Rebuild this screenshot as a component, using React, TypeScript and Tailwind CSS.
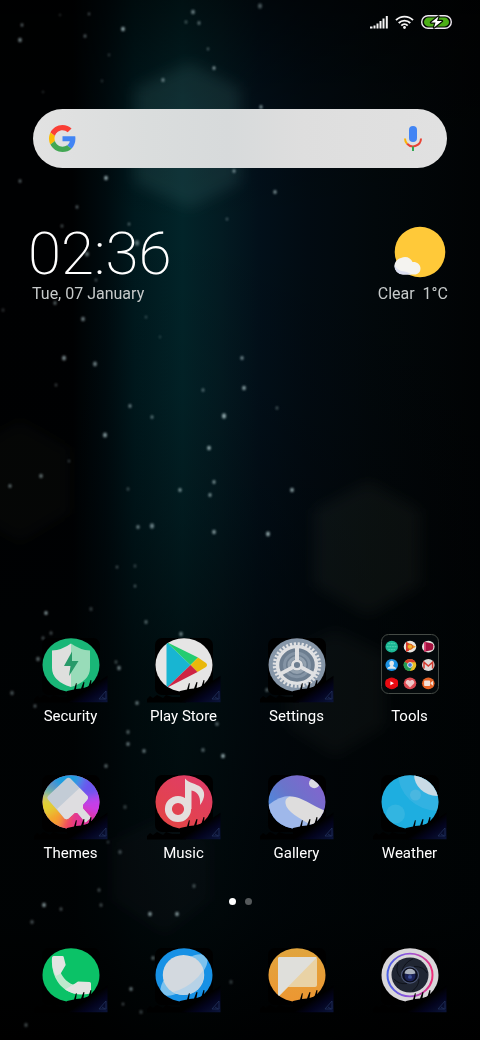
import type { ReactNode } from 'react'

// x, y, radius, opacity
const STARS: [number, number, number, number][] = [
    [22, 25, 1.5, 0.5], [20, 40, 2, 0.6], [60, 15, 1, 0.3], [89, 14, 1.3, 0.4], [85, 36, 1.6, 0.45],
    [123, 29, 2, 0.8], [109, 55, 1.2, 0.3], [102, 81, 1.2, 0.25], [163, 80, 1.7, 0.6], [193, 12, 2, 0.6],
    [186, 22, 1.5, 0.4], [199, 23, 1.7, 0.5], [208, 49, 1.2, 0.5], [214, 68, 1.6, 0.8], [260, 6, 2.3, 0.4],
    [261, 107, 1.7, 0.7], [43, 92, 1, 0.3], [20, 181, 1.6, 0.5], [106, 178, 2, 0.8], [77, 207, 1.5, 0.5],
    [62, 226, 1.5, 0.4], [129, 224, 1.4, 0.5], [137, 243, 2.4, 0.5], [87, 254, 2.2, 0.5], [96, 280, 1.4, 0.4],
    [234, 171, 1.6, 0.7], [275, 192, 1.8, 0.7], [227, 219, 1.4, 0.4], [55, 303, 1.7, 0.5], [3, 310, 1.6, 0.25],
    [83, 319, 2, 0.6], [146, 317, 1.4, 0.3], [160, 337, 1.2, 0.25], [64, 358, 2.2, 0.65], [95, 364, 2.1, 0.6],
    [56, 385, 1.5, 0.3], [242, 358, 1.8, 0.65], [244, 388, 2, 0.75], [203, 390, 1.6, 0.5], [130, 406, 1.7, 0.6],
    [152, 417, 1.6, 0.55], [224, 416, 2.3, 0.8], [277, 408, 1.5, 0.4], [105, 435, 2.2, 0.7], [209, 448, 2, 0.8],
    [69, 461, 1.4, 0.3], [41, 476, 2, 0.5], [10, 486, 1.8, 0.5], [128, 489, 1.5, 0.35], [180, 490, 1.8, 0.7],
    [214, 482, 1.7, 0.7], [210, 495, 1.7, 0.7], [292, 490, 2, 0.75], [138, 527, 1.8, 0.6], [152, 526, 2.3, 0.6],
    [214, 532, 2, 0.7], [268, 534, 2.1, 0.8], [117, 567, 1.4, 0.4], [135, 566, 1.5, 0.3], [135, 586, 1.4, 0.45],
    [46, 613, 1.8, 0.75], [91, 609, 1.7, 0.3], [146, 622, 1.7, 0.5], [51, 633, 1.6, 0.4], [43, 638, 1.6, 0.4],
    [38, 659, 1.9, 0.5], [181, 634, 1.9, 0.6], [116, 662, 1.5, 0.4], [119, 668, 1.9, 0.6], [12, 693, 1.9, 0.4],
    [35, 706, 1.6, 0.45], [137, 703, 1.8, 0.6], [267, 690, 1.7, 0.5], [217, 724, 1.8, 0.5], [128, 732, 1.7, 0.5],
    [128, 744, 1.8, 0.6], [144, 751, 1.8, 0.6], [203, 750, 1.8, 0.5], [223, 756, 2, 0.8], [106, 766, 1.8, 0.5],
    [125, 807, 1.8, 0.3], [108, 842, 1.4, 0.3], [120, 852, 1.8, 0.4], [194, 886, 1.7, 0.4], [99, 890, 1.6, 0.4],
    [44, 905, 2, 0.7], [61, 909, 1.6, 0.4], [101, 905, 1.6, 0.4], [32, 922, 1.8, 0.4], [150, 914, 2, 0.7],
    [177, 914, 2, 0.7], [153, 958, 1.7, 0.5], [131, 989, 1.8, 0.6], [231, 982, 1.7, 0.3], [123, 1004, 1.4, 0.4],
    [141, 1012, 1.8, 0.3], [26, 1025, 1.7, 0.4],
]

function Wallpaper() {
    return (
        <div className="absolute inset-0 overflow-hidden bg-[#010406]">
            <div className="absolute inset-0 bg-[linear-gradient(90deg,#000102_0%,#000102_15%,#000b0f_22%,#00191e_28%,#022429_38%,#031b22_46%,#02101a_54%,#020b12_64%,#02080b_78%,#010304_100%)]" />
            <div className="absolute inset-0 bg-[linear-gradient(180deg,rgba(0,0,0,0.55)_0%,rgba(0,0,0,0.1)_12%,rgba(0,0,0,0)_22%,rgba(0,2,4,0.1)_38%,rgba(0,2,4,0.3)_50%,rgba(0,3,4,0.65)_65%,rgba(0,3,4,0.82)_88%,rgba(0,0,0,0.95)_100%)]" />
            <svg width="480" height="1040" viewBox="0 0 480 1040" className="absolute left-0 top-0" aria-hidden="true">
                <defs>
                    <filter id="haze"><feGaussianBlur stdDeviation="7" /></filter>
                    <filter id="twinkle"><feGaussianBlur stdDeviation="0.8" /></filter>
                </defs>
                <g filter="url(#haze)">
                    <path d="M190 63l50 25v95l-50 25-55-25V88z" fill="#70a7aa" fillOpacity="0.13" />
                    <path d="M368 482l52 28v75l-52 30-54-30v-75z" fill="#7c8a74" fillOpacity="0.07" />
                    <path d="M335 630l50 24v72l-50 30-48-30v-72z" fill="#7c8a84" fillOpacity="0.055" />
                    <path d="M165 815l45 25v60l-45 35-53-35v-60z" fill="#8a7c84" fillOpacity="0.035" />
                    <path d="M20 420l50 28v65l-50 30-50-30v-65z" fill="#80807a" fillOpacity="0.035" />
                </g>
                <g filter="url(#twinkle)" fill="#b4cdd0">
                    {STARS.map(([x, y, r, o]) => (
                        <ellipse key={`${x}-${y}`} cx={x} cy={y} rx={r * 0.9} ry={r * 1.15} opacity={o} />
                    ))}
                </g>
            </svg>
        </div>
    )
}

function StatusBar() {
    return (
        <header className="flex h-11 items-center justify-end gap-[7px] pr-7">
            <svg width="18" height="14" viewBox="0 0 18 14" fill="#f5f5f5" role="img" aria-label="Signal">
                <path d="M0 11.500h2.500v2H0zM3.500 10.500h2v3h-2zM6.500 8.500h2v5h-2zM9.500 6h2v7.500h-2zM12.500 3.500h2v10h-2zM15.800 1h2v12.500h-2z" />
            </svg>
            <svg width="19" height="14" viewBox="0 0 19 14" fill="none" stroke="#f5f5f5" role="img" aria-label="Wi-Fi">
                <path d="M1 5.200a12 12 0 0 1 17 0M3.700 8a8.200 8.200 0 0 1 11.600 0M6.300 10.600a4.600 4.600 0 0 1 6.400 0" strokeWidth="1.900" />
                <circle cx="9.500" cy="12.500" r="1.400" fill="#f5f5f5" stroke="none" />
            </svg>
            <svg width="31" height="14" viewBox="0 0 31 14" role="img" aria-label="Battery charging">
                <rect x="0.700" y="0.700" width="29.600" height="12.600" rx="6.300" fill="#050805" stroke="#f0e9f3" strokeWidth="1.400" />
                <rect x="3" y="2.600" width="25" height="8.800" rx="4.400" fill="#4cae17" />
                <path d="M17.500 1.500L10 7.500h4.500l-1.500 5 8-6.500h-5z" fill="#fff" stroke="#081004" strokeWidth="2.400" strokeLinejoin="round" paintOrder="stroke" />
            </svg>
        </header>
    )
}

function SearchBar() {
    return (
        <form className="mx-[33px] mt-[65px] flex h-[59px] items-center rounded-full bg-[linear-gradient(90deg,#e2e2e2_0%,#dadddd_28%,#d7dadb_47%,#dedede_65%,#e1e1e1_100%)] pl-4 pr-6" onSubmit={(e) => e.preventDefault()}>
            <svg width="27" height="27" viewBox="0 0 48 48" role="img" aria-label="Google">
                <path fill="#fa3e35" d="M24 9.500c3.540 0 6.710 1.220 9.210 3.600l6.850-6.850C35.900 2.380 30.470 0 24 0 14.620 0 6.510 5.380 2.560 13.220l7.980 6.190C12.430 13.720 17.740 9.500 24 9.500z" />
                <path fill="#4285f4" d="M46.980 24.550c0-1.570-.15-3.090-.38-4.550H24v9.020h12.940c-.58 2.960-2.260 5.480-4.780 7.180l7.730 6c4.510-4.180 7.090-10.360 7.090-17.650z" />
                <path fill="#fbbc05" d="M10.530 28.590c-.48-1.450-.76-2.990-.76-4.590s.27-3.140.76-4.590l-7.980-6.190C.92 16.460 0 20.120 0 24c0 3.880.92 7.540 2.560 10.780l7.970-6.190z" />
                <path fill="#43a753" d="M24 48c6.480 0 11.930-2.130 15.890-5.810l-7.730-6c-2.150 1.450-4.920 2.300-8.160 2.300-6.260 0-11.570-4.220-13.470-9.910l-7.980 6.190C6.510 42.620 14.620 48 24 48z" />
            </svg>
            <input type="text" aria-label="Search" className="h-full min-w-0 flex-1 bg-transparent px-3 font-[Roboto,sans-serif] text-base text-gray-800 outline-none" />
            <button type="button" aria-label="Voice search">
                <svg width="20" height="27" viewBox="0 0 20 27" fill="none" strokeWidth="2">
                    <rect x="6" y="1" width="8" height="16" rx="4" fill="#4285f4" />
                    <path d="M2 13.500c0 2.100.8 3.900 2.100 5.200" stroke="#fbb305" />
                    <path d="M4.100 18.700A8 8 0 0 0 18 13.500" stroke="#ea4335" />
                    <path d="M10 21.500V26" stroke="#34a853" />
                </svg>
            </button>
        </form>
    )
}

function ClockWidget() {
    return (
        <section className="mt-[56px] flex justify-between pl-7 pr-8">
            <div>
                <time className="flex h-[60px] items-center font-[Roboto,sans-serif] text-[60px] font-extralight leading-[60px] text-white">02:36</time>
                <p className="pl-1 font-[Roboto,sans-serif] text-base leading-5 text-[#c6caca]">Tue, 07 January</p>
            </div>
            <div className="flex flex-col items-end">
                <svg width="54" height="60" viewBox="0 0 54 60" role="img" aria-label="Partly cloudy">
                    <circle cx="26" cy="28" r="25.300" fill="#ffc939" />
                    <path d="M9 50.500a8.500 8.500 0 0 1-8.500-8.500c0-5 4-7.500 6.500-8 5-2.500 10 0 11.500 4 4-.5 8 2 8 6.500 0 3.500-2.500 6-6 6z" fill="#f4f3f0" />
                    <path d="M.5 41c2 4.500 6 6 10 6.500 3 .5 5 1.500 7 3H9A8.500 8.500 0 0 1 .5 41z" fill="#dcdff0" />
                </svg>
                <p className="whitespace-pre font-[Roboto,sans-serif] text-base leading-5 text-[#c6caca]">Clear  1°C</p>
            </div>
        </section>
    )
}

// Round artwork on a black tile, with the jagged dark edge in the lower right corner.
function Tile({ name, base, children }: { name: string; base: string; children: ReactNode }) {
    const clip = `clip-${name}`
    return (
        <svg width="76" height="70" viewBox="0 -4 76 70" aria-hidden="true">
            <defs>
                <clipPath id={clip}><ellipse cx="38" cy="28" rx="28.500" ry="26.800" /></clipPath>
                <linearGradient id={`edge-${name}`} x1="0" y1="0" x2="1" y2="1">
                    <stop offset="0.500" stopColor="#000" />
                    <stop offset="0.700" stopColor="#03041f" />
                    <stop offset="1" stopColor="#0c163c" />
                </linearGradient>
            </defs>
            <rect x="9" y="1" width="58" height="57" rx="7" fill="#000" />
            <path d="M1 62l3-3 3 2 4-3 6 3 3-3 6 2h14v5.500H1z" fill="#000" />
            <g clipPath={`url(#${clip})`}>
                <rect width="76" height="60" fill={base} />
                {children}
            </g>
            <path d="M34 54l7-1.500 2-6.500.8.500-.8 5.500 5-.5 2.500-6.500 1 .3-1 5.700 5-1.500 2-6.500 1 .3-.5 5 4.500-1.500 2-5.500 1 .5v3l9-6v26.500H34z" fill={`url(#edge-${name})`} />
            <path d="M66 62l7-8v8zM69 60l3 2" fill="none" stroke="#22315a" strokeWidth="0.800" />
        </svg>
    )
}

function SecurityIcon() {
    return (
        <Tile name="security" base="#19b677">
            <path d="M38 6.500Q47 13 57 13.500V31q0 13-19 19z" fill="#98dcb9" />
            <path d="M38 6.500Q29 13 19 13.500V31q0 13 19 19z" fill="#dedfdd" />
            <path d="M39 14.500l-8 14.500h6.500L36 39l9.500-15H39z" fill="#279a69" />
        </Tile>
    )
}

function PlayStoreIcon() {
    return (
        <Tile name="play" base="#e6e5e5">
            <path d="M20.500 5v46L44.500 28z" fill="#18b5d2" />
            <path d="M20.500 5L52 20.500 44.500 28z" fill="#24cc71" />
            <path d="M52 20.500l8 5.500q2 2 0 4l-8.500 5L44.500 28z" fill="#e9b80b" />
            <path d="M20.500 51l24-23 7 7z" fill="#cf2444" />
        </Tile>
    )
}

function SettingsIcon() {
    return (
        <Tile name="settings" base="#8696a8">
            <g transform="translate(38 28) scale(1 0.940)" fill="none">
                <circle r="22.500" stroke="#e0e1e3" strokeWidth="3.500" strokeDasharray="2.200 1.727" />
                <circle r="19.500" fill="#6d7e90" stroke="#e0e1e3" strokeWidth="3.500" />
                <circle r="12.500" stroke="#8494a5" strokeWidth="3" />
                <circle r="8" stroke="#93a1af" strokeWidth="3" />
                <path d="M0-4v-15M3.500 2l13 7.500M-3.500 2l-13 7.500" stroke="#e0e1e3" strokeWidth="4" />
                <circle r="4.500" fill="#6d7e90" stroke="#e0e1e3" strokeWidth="2.800" />
            </g>
        </Tile>
    )
}

function ToolsIcon() {
    return (
        <svg width="76" height="70" viewBox="0 -4 76 70" aria-hidden="true">
            <rect x="9.500" y="-2.500" width="57" height="59" rx="7" fill="#04090b" stroke="#454b46" />
            <g transform="translate(19.700 9.700)">
                <ellipse rx="6.300" ry="5.900" fill="#1cb894" />
                <path d="M-3.500-3h7M-3.500 3h7M-5 0H5" stroke="#5fd6ba" strokeWidth="0.800" strokeDasharray="2 0.600" />
            </g>
            <g transform="translate(38 9.700)">
                <ellipse rx="6.300" ry="5.900" fill="#e7e4df" />
                <path d="M-4-5l10 5-10 5z" fill="#f09a20" />
                <path d="M-4-5l3 2v7l-3 1z" fill="#d8352f" />
                <circle r="2.600" fill="#efb12a" stroke="#d5571e" />
            </g>
            <g transform="translate(56.300 9.700)">
                <ellipse rx="6.300" ry="5.900" fill="#e7e4df" />
                <path d="M-4-5l7 1.500q2 .5 2 2V1q0 2-2 2.500L-4 5z" fill="#a4123f" />
                <path d="M-4-5l1.500.5v9L-4 5z" fill="#e2467a" />
            </g>
            <g transform="translate(19.700 28)">
                <ellipse rx="6.300" ry="5.900" fill="#1b92e4" />
                <path d="M0-4.300c3 0 2.700 4 1.300 5 .3 1.300 2.700 1 3.200 3h-9c.5-2 2.900-1.700 3.200-3-1.400-1-1.700-5 1.300-5z" fill="#dfe7ec" />
            </g>
            <g transform="translate(38 28)">
                <ellipse rx="6.300" ry="5.900" fill="#e9bd24" />
                <path d="M0 0L-5.400-3.200A6.300 5.900 0 0 1 5.600-2.700H0z" fill="#d93c2b" />
                <path d="M0 0l-5.400-3.200A6.100 5.900 0 0 0 0 5.900L2.500 1z" fill="#249b56" />
                <circle r="2.400" fill="#3f7be0" stroke="#e5e5e5" />
            </g>
            <g transform="translate(56.300 28)">
                <ellipse rx="6.300" ry="5.900" fill="#dedbd8" />
                <path d="M-4.300 3.500v-6.300L0 1l4.300-3.800v6.300" fill="none" stroke="#d13c31" strokeWidth="1.500" />
            </g>
            <g transform="translate(19.700 46.300)">
                <ellipse rx="6.300" ry="5.900" fill="#d80b12" />
                <rect x="-6.300" y="-4" width="12.600" height="8" rx="2.500" fill="#ea0b12" />
                <path d="M-1.300-2L2.300 0l-3.600 2z" fill="#fff" />
            </g>
            <g transform="translate(38 46.300)">
                <ellipse rx="6.300" ry="5.900" fill="#dc4a52" />
                <path d="M0 4.200L-4 .3C-5.500-2-2-5 0-2.300 2-5 5.500-2 4 .3z" fill="#eec9c9" />
            </g>
            <g transform="translate(56.300 46.300)">
                <ellipse rx="6.300" ry="5.900" fill="#e66326" />
                <rect x="-4.200" y="-2.700" width="6" height="5.500" rx="0.800" fill="#f1e2da" />
                <path d="M2.300-.5l2.500-2v5l-2.500-2z" fill="#f1e2da" />
            </g>
        </svg>
    )
}

function ThemesIcon() {
    return (
        <Tile name="themes" base="#b866bd">
            <defs>
                <filter id="swirl" x="-50%" y="-50%" width="200%" height="200%"><feGaussianBlur stdDeviation="4" /></filter>
            </defs>
            <g filter="url(#swirl)">
                <path d="M38 28L5-5H60z" fill="#1f9fe0" />
                <path d="M38 28L55-8l25 5v28z" fill="#6a55ee" />
                <path d="M38 28l40-8v30z" fill="#c83ce8" />
                <path d="M38 28l40 20v14H38z" fill="#e0359a" />
                <path d="M38 28l4 36H18z" fill="#f0415c" />
                <path d="M38 28L22 64 0 50z" fill="#f6a02c" />
                <path d="M38 28L0 50V18z" fill="#e2cf33" />
                <path d="M38 28L0 18V-2z" fill="#4bb6ae" />
            </g>
            <path d="M33.500 4.500q2-1.500 4 0L54.500 22q1.500 2-.5 4l-4 4.500v4l8 9-5.500 5-8-9.500h-3l-6 5.500q-2 1.500-4 0L15 25.500q-1.500-2 0-3.500z" fill="#c3ccd6" />
            <path d="M46.500 14l8 8q1.500 2-.5 4l-4 4.500v4l8 9-5.500 5-8-9.500h-3l-6 5.500q-2 1.500-4 0L24 35z" fill="#dedde0" />
        </Tile>
    )
}

function MusicIcon() {
    return (
        <Tile name="music" base="url(#music-bg)">
            <defs>
                <linearGradient id="music-bg" x1="1" y1="0" x2="0.200" y2="1">
                    <stop offset="0.200" stopColor="#e03d66" />
                    <stop offset="1" stopColor="#e44640" />
                </linearGradient>
            </defs>
            <circle cx="32" cy="35" r="9.600" fill="none" stroke="#e4dedd" strokeWidth="7" />
            <path d="M39 4.500V35h6.500V16.500c5 1 9.500 5 8.500 14.500 5.500-7 5.500-14 .5-18-4.500-3.500-11-3.500-15.500-8.500z" fill="#e4dedd" />
        </Tile>
    )
}

function GalleryIcon() {
    return (
        <Tile name="gallery" base="url(#gallery-sky)">
            <defs>
                <linearGradient id="gallery-sky" x1="0" y1="0.800" x2="1" y2="0.200">
                    <stop offset="0.150" stopColor="#478ddf" />
                    <stop offset="0.500" stopColor="#6a74ca" />
                    <stop offset="1" stopColor="#8960cf" />
                </linearGradient>
            </defs>
            <path d="M8 32Q20 22 31 22L60 56H8z" fill="#9fb8ea" />
            <path d="M33 22.500c-5 0-7 3-6.500 7 1 8 14 15 25 21l20 4V39C57 34 42 22.500 33 22.500z" fill="#dedddd" />
            <ellipse cx="55.300" cy="9.300" rx="5.300" ry="5" fill="#dcdce1" />
        </Tile>
    )
}

function WeatherIcon() {
    return (
        <Tile name="weather" base="#1eaee0">
            <ellipse cx="66" cy="-1" rx="40" ry="38" fill="#4cb8e4" fillOpacity="0.450" />
            <ellipse cx="65" cy="0" rx="23" ry="22" fill="#c9dbe6" />
            <circle cx="43.500" cy="21" r="5.500" fill="#6fbede" fillOpacity="0.400" />
            <circle cx="23.500" cy="40" r="9.500" fill="#45bce2" fillOpacity="0.500" />
        </Tile>
    )
}

function PhoneIcon() {
    return (
        <Tile name="phone" base="#0bc267">
            <path d="M19 15c0 16 9 29 24 32l4-9-7-.5c-6-2-9-6-12-11l-2-5z" fill="#bfe8cd" />
            <path d="M20.500 9h9q1 0 1.200 1l2 8-5 8.500-4.700 2.500C19 22 18.500 15 19 10.500q.3-1.500 1.500-1.500z" fill="#e3e4e2" />
            <path d="M32 42.500l8.500-5 4.500-3 11.500.5q1.500 0 1.500 1.500v8.500q0 1.500-1.500 1.700C47 48.500 40 47.500 32 42.500z" fill="#e3e4e2" />
        </Tile>
    )
}

function BrowserIcon() {
    return (
        <Tile name="browser" base="#1791e5">
            <ellipse cx="38" cy="28" rx="29" ry="12" transform="rotate(-40 38 28)" fill="#7cc2ee" />
            <ellipse cx="37.500" cy="28" rx="20.700" ry="20" fill="#d3d9df" />
            <path d="M57.500 23Q46 40 27 45q12 6 23-1 9-8 7.500-21z" fill="#a9cfe9" fillOpacity="0.700" />
        </Tile>
    )
}

function NotesIcon() {
    return (
        <Tile name="notes" base="url(#notes-bg)">
            <defs>
                <linearGradient id="notes-bg" x1="0" y1="0" x2="0" y2="1">
                    <stop offset="0" stopColor="#e0a53e" />
                    <stop offset="1" stopColor="#ee9530" />
                </linearGradient>
            </defs>
            <path d="M20 10h36q2 0 2 2v26q0 2-2 2H29L19 50z" fill="#e9d2a5" />
            <path d="M20 10h36q1.500 0 1.700.5L19 50V11z" fill="#dfdfdb" />
        </Tile>
    )
}

function CameraIcon() {
    return (
        <Tile name="camera" base="#d9d7da">
            <defs>
                <linearGradient id="camera-ring" x1="0" y1="0.500" x2="1" y2="0.500">
                    <stop offset="0" stopColor="#4b63e6" />
                    <stop offset="0.500" stopColor="#9a52d8" />
                    <stop offset="1" stopColor="#ee2f78" />
                </linearGradient>
            </defs>
            <g transform="translate(38 28) scale(1 0.950)" fill="none">
                <circle r="22.500" stroke="url(#camera-ring)" strokeWidth="2" />
                <circle r="18.500" fill="#202633" />
                <path d="M-8-4Q-6-13 3-17M4-9q10 0 13 7M9 4q0 8-7 13M-3 9q-9 1-13-5M-10 2q-5-6-2-14" stroke="#0d1018" strokeWidth="0.900" />
                <circle r="8.500" fill="#0a0d1c" stroke="#4d5878" strokeWidth="1.200" />
                <circle cy="1" r="5.500" fill="#1b2255" />
                <path d="M-5.500-1.500a5.500 5 0 0 1 11 0Q0 0-5.500-1.500z" fill="#a9b0bd" />
                <circle cy="2" r="2" fill="#3c4f98" />
            </g>
        </Tile>
    )
}

const APPS = [
    { label: 'Security', icon: <SecurityIcon /> },
    { label: 'Play Store', icon: <PlayStoreIcon /> },
    { label: 'Settings', icon: <SettingsIcon /> },
    { label: 'Tools', icon: <ToolsIcon /> },
    { label: 'Themes', icon: <ThemesIcon /> },
    { label: 'Music', icon: <MusicIcon /> },
    { label: 'Gallery', icon: <GalleryIcon /> },
    { label: 'Weather', icon: <WeatherIcon /> },
]

const DOCK = [
    { label: 'Phone', icon: <PhoneIcon /> },
    { label: 'Browser', icon: <BrowserIcon /> },
    { label: 'Notes', icon: <NotesIcon /> },
    { label: 'Camera', icon: <CameraIcon /> },
]

export default function App() {
    return (
        <div className="relative isolate flex min-h-screen flex-col font-[Roboto,sans-serif]">
            <div className="absolute inset-0 -z-10">
                <Wallpaper />
            </div>
            <StatusBar />
            <SearchBar />
            <ClockWidget />

            <main className="mt-auto grid grid-cols-4 gap-y-[42px] px-[14px] pt-10">
                {APPS.map((app) => (
                    <button key={app.label} type="button" className="flex flex-col items-center gap-px">
                        {app.icon}
                        <span className="text-[15px] leading-6 text-white">{app.label}</span>
                    </button>
                ))}
            </main>

            <nav aria-label="Pages" className="mt-[33px] flex justify-center gap-[9px]">
                <button type="button" aria-label="Page 1" className="size-[7px] rounded-full bg-white" />
                <button type="button" aria-label="Page 2" className="size-[7px] rounded-full bg-[#55595b]" />
            </nav>

            <footer className="mb-[27px] mt-[38px] grid grid-cols-4 px-[14px]">
                {DOCK.map((app) => (
                    <button key={app.label} type="button" aria-label={app.label} className="flex justify-center">
                        {app.icon}
                    </button>
                ))}
            </footer>
        </div>
    )
}
